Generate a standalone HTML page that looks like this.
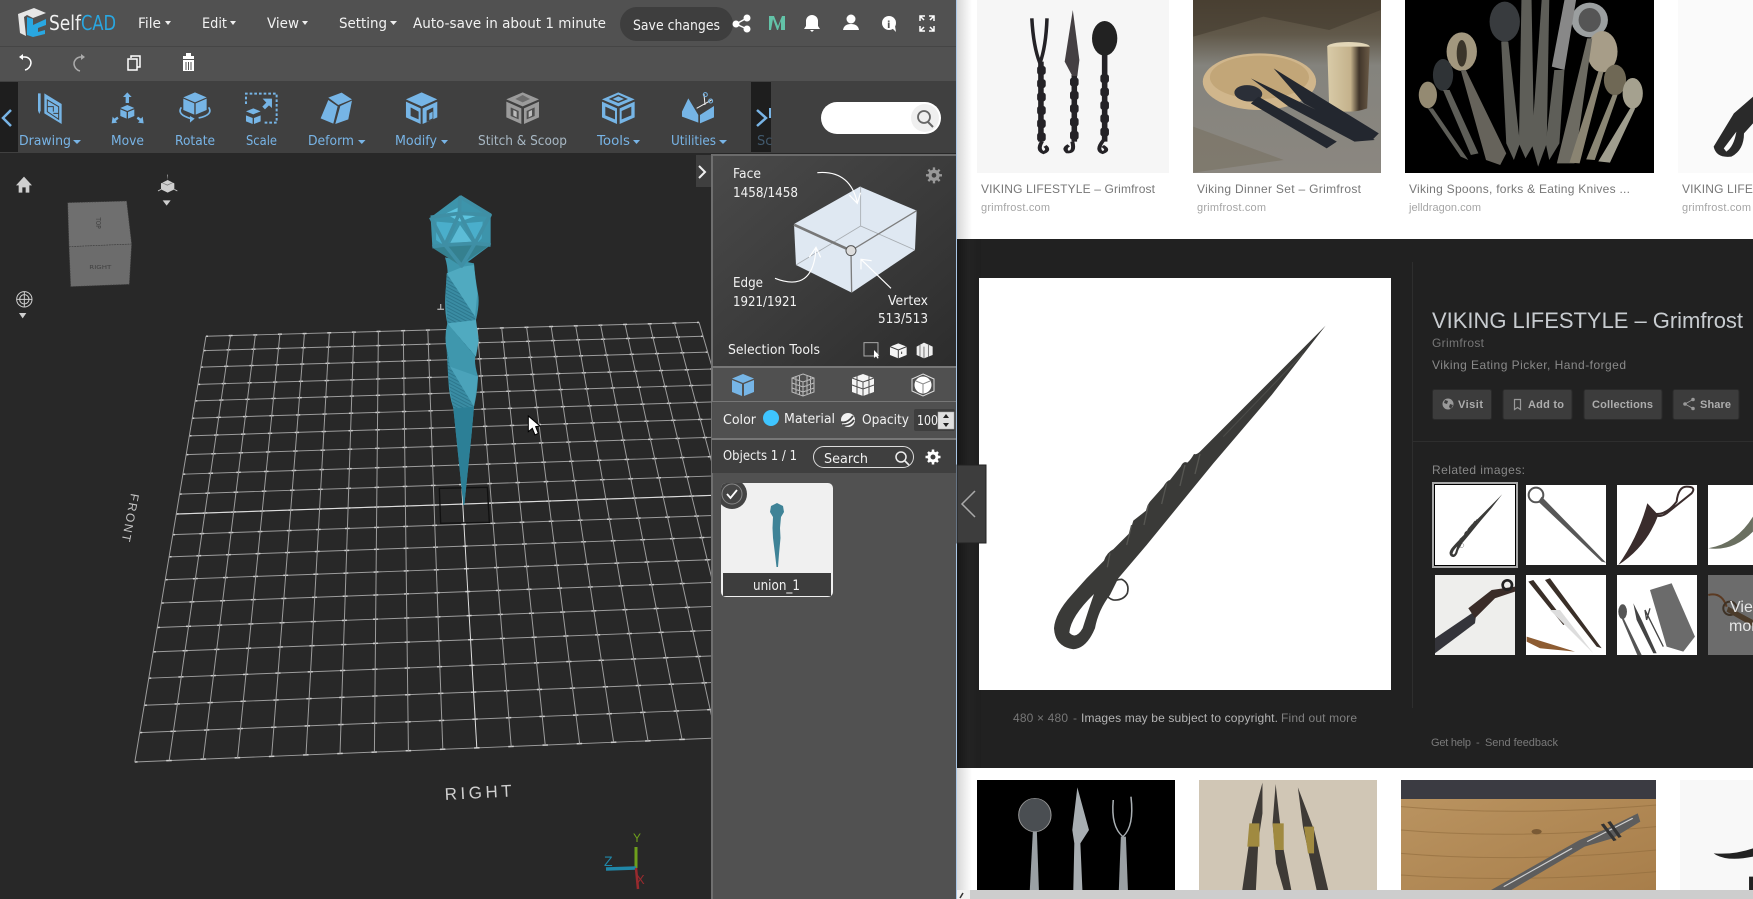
<!DOCTYPE html>
<html lang="en"><head><meta charset="utf-8"><title>SelfCAD</title>
<style>
html,body{margin:0;padding:0;width:1753px;height:899px;overflow:hidden;background:#282828}
svg{position:absolute;left:0;top:0;display:block}
text{font-family:"DejaVu Sans",sans-serif;white-space:pre}
.w{fill:#f2f2f2;font-size:14px}
.b{fill:#78b4e6;font-size:13px}
.g line{vector-effect:non-scaling-stroke;stroke:#9c9c9c;stroke-width:1}
.ic{fill:#76b5e6}
</style></head><body>
<svg width="1753" height="899" viewBox="0 0 1753 899" xmlns="http://www.w3.org/2000/svg">
<defs>
<linearGradient id="sh" x1="0" x2="1"><stop offset="0" stop-color="#d8d8d8"/><stop offset="1" stop-color="#fff"/></linearGradient>
<linearGradient id="pg" x1="0" y1="0" x2="1" y2="1"><stop offset="0" stop-color="#4a4a4a"/><stop offset=".55" stop-color="#3a3a3a"/><stop offset="1" stop-color="#2c2c2c"/></linearGradient>
<linearGradient id="dk" x1="0" x2="1"><stop offset="0" stop-color="#171717"/><stop offset=".5" stop-color="#232323"/><stop offset="1" stop-color="#1f1f1f"/></linearGradient>
<linearGradient id="st" x1="0" y1="0" x2="0" y2="1"><stop offset="0" stop-color="#54493a"/><stop offset=".2" stop-color="#61594a"/><stop offset=".38" stop-color="#84837d"/><stop offset="1" stop-color="#8b8780"/></linearGradient>
<linearGradient id="wd" x1="0" y1="0" x2="1" y2="1"><stop offset="0" stop-color="#bb9562"/><stop offset="1" stop-color="#a87e4a"/></linearGradient>
<linearGradient id="cup" x1="0" x2="1"><stop offset="0" stop-color="#d9cba8"/><stop offset=".55" stop-color="#c4b28c"/><stop offset=".75" stop-color="#40352a"/><stop offset="1" stop-color="#6a5a46"/></linearGradient>
<pattern id="ht" width="6" height="9" patternUnits="userSpaceOnUse" patternTransform="rotate(28)"><rect width="6" height="2.500" fill="#1d5f73" opacity=".55"/></pattern>
<clipPath id="cc"><rect x="721" y="483" width="112" height="114" rx="5"/></clipPath>
<g id="pk">
<path fill="#3a3a38" d="M1067 167L690 545Q680 555 672 552Q662 570 652 578Q640 572 632 590L600 630Q590 632 580 650L540 695Q532 705 528 722L490 752Q485 770 478 790L430 838Q410 848 402 872L350 925L305 975Q255 1030 252 1075Q255 1130 310 1138Q350 1135 375 1075Q385 1020 420 975L445 925L530 825L730 580L905 375Z"/>
<path fill="#fff" d="M298 1088Q302 1040 372 972Q352 1030 338 1075Q318 1110 298 1088Z"/>
<path fill="none" stroke="#3a3a38" stroke-width="5" d="M385 980Q415 930 455 928Q480 940 472 970Q460 992 430 990Q415 985 410 975"/>
<path fill="none" stroke="#565652" stroke-width="4" d="M690 552L675 612M645 585L630 648M590 640L575 702M535 705L522 765M485 765L470 825M420 850L412 892"/>
<path fill="none" stroke="#4c4c49" stroke-width="3" d="M1000 250L760 500"/>
</g>
<g id="rows">
<path pathLength="20" d="M268 70L1515 33"/><path pathLength="20" d="M262 108L1525 70"/><path pathLength="20" d="M255 152L1537 112"/><path pathLength="20" d="M248 198L1549 157"/><path pathLength="20" d="M241 242L1561 199"/><path pathLength="20" d="M233 288L1573 244"/><path pathLength="20" d="M226 335L1586 289"/><path pathLength="20" d="M218 385L1599 337"/><path pathLength="20" d="M210 437L1613 388"/><path pathLength="20" d="M201 490L1627 439"/><path pathLength="20" d="M193 543L1641 490"/><path pathLength="20" d="M184 598L1656 543"/><path pathLength="20" d="M175 657L1672 600"/><path pathLength="20" d="M165 718L1688 659"/><path pathLength="20" d="M155 780L1705 719"/><path pathLength="20" d="M145 845L1722 782"/><path pathLength="20" d="M135 910L1740 845"/><path pathLength="20" d="M123 980L1758 912"/><path pathLength="20" d="M112 1052L1778 982"/><path pathLength="20" d="M100 1125L1797 1053"/><path pathLength="20" d="M88 1203L1818 1128"/>
</g>
</defs>

<!-- canvas -->
<rect width="957" height="899" fill="#282828"/>

<!-- grid -->
<g class="g" transform="translate(100,310) scale(.3954,.3757)">
<g fill="none" stroke="#9c9c9c" stroke-width="2.600"><use href="#rows"/></g>
<g fill="none" stroke="#cfcfcf" stroke-width="4" stroke-dasharray=".16 .84" stroke-dashoffset=".08"><use href="#rows"/></g>
<path d="M193 543L1641 490" fill="none" stroke="#dcdcdc" stroke-width="3"/>
<line x1="268" y1="70" x2="88" y2="1203"/><line x1="330" y1="68" x2="175" y2="1199"/><line x1="393" y1="66" x2="261" y2="1196"/><line x1="455" y1="64" x2="348" y2="1192"/><line x1="517" y1="63" x2="434" y2="1188"/><line x1="580" y1="61" x2="521" y2="1184"/><line x1="642" y1="59" x2="607" y2="1181"/><line x1="704" y1="57" x2="694" y2="1177"/><line x1="767" y1="55" x2="780" y2="1173"/><line x1="829" y1="53" x2="867" y2="1169"/><line x1="892" y1="52" x2="953" y2="1166" style="stroke:#ddd"/><line x1="954" y1="50" x2="1040" y2="1162"/><line x1="1016" y1="48" x2="1126" y2="1158"/><line x1="1079" y1="46" x2="1213" y2="1154"/><line x1="1141" y1="44" x2="1299" y2="1150"/><line x1="1203" y1="42" x2="1386" y2="1147"/><line x1="1266" y1="40" x2="1472" y2="1143"/><line x1="1328" y1="39" x2="1559" y2="1139"/><line x1="1390" y1="37" x2="1645" y2="1135"/><line x1="1453" y1="35" x2="1732" y2="1132"/><line x1="1515" y1="33" x2="1818" y2="1128"/>
</g>

<!-- knife model -->
<g transform="translate(400,180) scale(.3333)">
<path fill="none" stroke="#111" stroke-width="4" d="M118 925L262 922L268 1027L122 1030Z"/>
<path fill="#3f97ad" d="M135 232Q150 280 137 330Q132 390 142 430Q132 470 140 510Q150 545 145 590Q145 640 160 685L190 975L193 975L215 760L222 680Q232 640 234 590Q222 550 226 530Q238 490 234 470Q222 440 228 420Q240 370 234 340Q225 290 222 250Z"/>
<path fill="#2c7f96" d="M160 685L222 680L215 760L193 975L190 975Z"/>
<path fill="#50aac0" d="M140 280L225 410L232 340Q225 290 222 255L190 260Z"/>
<path fill="#3a8ca3" d="M137 330L140 280L225 410L226 530L142 430Z"/>
<path fill="url(#ht)" d="M137 330L140 280L225 410L226 530L142 430Z"/>
<path fill="#50aac0" d="M142 430L228 530L236 480L228 420Z"/>
<path fill="#3a8ca3" d="M140 510L150 560L222 680L160 685L145 600Z"/>
<path fill="url(#ht)" d="M140 510L150 560L222 680L160 685L145 600Z"/>
<path fill="#4ba3ba" d="M150 560L234 590L222 680Z"/>
<path fill="#3d94ab" d="M180 46L272 105L272 195L185 260L97 200L92 112Z"/>
<path fill="#5cc3de" d="M128 105L180 80L180 100L235 105L180 125L148 108Z"/>
<path fill="#4aaecb" d="M110 125L170 130L130 195L108 180ZM190 130L248 125L245 175L225 195Z"/>
<path fill="#5cbcd6" d="M180 135L215 185L150 190Z"/>
<path fill="#35808f" d="M100 205L180 190L270 195L190 250L185 260Z"/>
<path fill="none" stroke="#3f8fa5" stroke-width="11" stroke-linejoin="round" d="M180 50L178 100L92 112M180 50L270 105L178 100M178 100L135 195L225 190L178 100M92 112L135 195L97 200M270 105L225 190L272 195M135 195L185 258L225 190"/>
<path fill="#a8a8a8" d="M120 372h4v14h8v4h-20v-4h8z"/>
<path fill="#fff" stroke="#000" stroke-width="3" d="M385 708L385 755L397 745L405 765L415 760L407 740L420 738Z"/>
</g>

<!-- view labels -->
<text transform="translate(131,493) rotate(101)" font-size="12" letter-spacing="1.800" fill="#c4c4c4" style="font-family:'Liberation Sans',sans-serif">FRONT</text>
<text transform="translate(445,800) rotate(-3)" font-size="17" textLength="67" fill="#cfcfcf" style="font-family:'Liberation Sans',sans-serif">RIGHT</text>

<!-- axis -->
<path stroke="#6e9f1c" stroke-width="3" fill="none" d="M636 847V868"/>
<path stroke="#2087a8" stroke-width="3.500" fill="none" d="M606 869L636 868"/>
<path stroke="#982a2e" stroke-width="2.500" fill="none" d="M636 868L638 889"/>
<text x="633" y="842" font-size="12" fill="#6e9f1c" style="font-family:'Liberation Sans',sans-serif">Y</text>
<text x="604" y="866" font-size="14" fill="#2087a8" style="font-family:'Liberation Sans',sans-serif">Z</text>
<text x="636" y="884" font-size="13" fill="#982a2e" style="font-family:'Liberation Sans',sans-serif">X</text>

<!-- nav cube and tools -->
<g transform="translate(0,160) scale(.3333)">
<path fill="#6f6f6f" d="M203 128L380 123L395 252L207 260Z"/>
<path fill="#6c6c6c" d="M207 260L395 252L388 373L212 380Z"/>
<path stroke="#3c3c3c" stroke-width="2" stroke-dasharray="5 3" fill="none" d="M203 128L380 123L395 252L388 373L212 380L207 260L203 128M207 260L395 252"/>
<text transform="translate(288,172) rotate(90)" font-size="20" fill="#404040" textLength="34" lengthAdjust="spacingAndGlyphs">TOP</text>
<text x="268" y="327" font-size="16" fill="#404040" textLength="66" lengthAdjust="spacingAndGlyphs">RIGHT</text>
<path fill="#cfcfcf" d="M72 50L96 76H88V98H77V82H67V98H56V76H48Z"/>
<path fill="#cfcfcf" d="M501 44h2v16l20 10v18l-20 10-20-10V70l20-10z"/>
<path stroke="#cfcfcf" stroke-width="2.500" d="M483 88l-9 5M523 88l9 5"/>
<path fill="#282828" d="M502 74l-16-7v2l16 8 16-8v-2z" opacity=".5"/>
<path fill="#cfcfcf" d="M488 121h24l-12 16zM57 459h22l-11 16z"/>
<circle cx="73" cy="418" r="23" fill="none" stroke="#cfcfcf" stroke-width="3"/>
<circle cx="73" cy="418" r="14" fill="none" stroke="#cfcfcf" stroke-width="3"/>
<path stroke="#cfcfcf" stroke-width="3" d="M50 418H96M73 395V441"/>
</g>

<!-- top bars -->
<rect width="957" height="81" fill="#515151"/>
<rect y="46" width="957" height="1" fill="#454545"/>
<rect y="81" width="957" height="72" fill="#404040"/>
<rect y="82" width="18" height="70" fill="#1e1e1e"/>
<rect x="751" y="82" width="20" height="70" fill="#1e1e1e"/>

<!-- logo -->
<path fill="#e6e6e6" d="M18 14L34 8L46 13L33 18L27 15L24 17L26 36L20 33Z"/>
<path fill="#29a7e1" d="M27 17L33 19V25L46 19V25L38 28V32L45 30V34L33 37L27 35Z"/>
<text x="49" y="30" font-size="20" fill="#f0f0f0" textLength="32" lengthAdjust="spacingAndGlyphs">Self</text>
<text x="81" y="30" font-size="20" fill="#29a7e1" textLength="35" lengthAdjust="spacingAndGlyphs">CAD</text>

<text class="w" x="138" y="28" textLength="23" lengthAdjust="spacingAndGlyphs">File</text>
<text class="w" x="202" y="28" textLength="25" lengthAdjust="spacingAndGlyphs">Edit</text>
<text class="w" x="267" y="28" textLength="32" lengthAdjust="spacingAndGlyphs">View</text>
<text class="w" x="339" y="28" textLength="48" lengthAdjust="spacingAndGlyphs">Setting</text>
<text class="w" x="413" y="28" textLength="193" lengthAdjust="spacingAndGlyphs">Auto-save in about 1 minute</text>
<path fill="#eee" d="M165 21h6l-3 4zM230 21h6l-3 4zM302 21h6l-3 4zM390 21h7l-3.500 4z"/>
<rect x="620" y="7" width="113" height="34" rx="17" fill="#3e3e3e"/>
<text class="w" x="633" y="30" textLength="87" lengthAdjust="spacingAndGlyphs">Save changes</text>

<!-- header icons -->
<g fill="#fff" stroke="none">
<circle cx="736" cy="24" r="3.500"/><circle cx="747" cy="18" r="3.500"/><circle cx="747" cy="29" r="3.500"/>
<path stroke="#fff" stroke-width="1.500" d="M736 24L747 18M736 24L747 29"/>
<path d="M812 15a6 6 0 0 1 6 6v5l2 3h-16l2-3v-5a6 6 0 0 1 6-6zM810 30h4l-2 2z"/>
<circle cx="851" cy="19" r="4.500"/><path d="M843 30q1-6 8-6t8 6z"/>
<circle cx="889" cy="23" r="7"/><path d="M892 28l4 4-1-6z"/>
</g>
<text x="887" y="28" font-size="10" font-weight="bold" fill="#515151">i</text>
<path fill="#63c3a8" d="M769 16h5l4 10 4-10h3v14h-4v-9l-3 9h-1l-4-11-2 11h-2z"/>
<path fill="none" stroke="#fff" stroke-width="1.500" d="M920 21v-5h5M934 21v-5h-5M920 26v5h5M934 26v5h-5M920 16l4 4M934 16l-4 4M920 31l4-4M934 31l-4-4"/>

<!-- undo row -->
<path fill="none" stroke="#fff" stroke-width="1.500" d="M20 57h5a6 6 0 0 1 6 6a8 8 0 0 1-6 7"/><path fill="#fff" d="M19 57l4-3v6z"/>
<path fill="none" stroke="#aaa" stroke-width="1.500" d="M84 57h-4a7 7 0 0 0-6 7a8 8 0 0 0 6 7"/><path fill="#aaa" d="M85 57l-4-3v6z"/>
<rect x="128" y="59" width="9" height="11" fill="none" stroke="#fff" stroke-width="1.500"/><path fill="none" stroke="#fff" stroke-width="1.500" d="M131 58v-2h9v11h-3"/>
<path fill="#fff" d="M183 60h11v11h-11zM186 53h5v3h3v3h-11v-3h3z"/><path stroke="#515151" d="M186 62v8M188.500 62v8M191 62v8"/>

<path fill="none" stroke="#78b4e6" stroke-width="2.500" d="M11 110l-8 8 8 8"/>
<path fill="none" stroke="#78b4e6" stroke-width="2.500" d="M757 110l9 8-9 8"/>
<rect x="769" y="108" width="2" height="10" fill="#78b4e6"/>

<!-- toolbar icons (3x coords) -->
<g transform="scale(.3333)" class="ic">
<path d="M133 280L185 312V372L133 340Z"/><path d="M114 280h8v52l-4 10-4-10z"/>
<path stroke="#404040" stroke-width="3" fill="none" d="M142 300L176 320V358L142 335ZM142 320H160V335M176 340H160"/>
<path d="M382 277l13 14h-8v18h-10v-18h-8z"/>
<path d="M382 315l21 9-21 9-21-9zM361 328l19 8v20l-19-8zM403 328l-19 8v20l19-8z"/>
<path d="M335 370l3-20 5 6 9-6 4 6-9 7 5 5zM431 370l-3-20-5 6-9-6-4 6 9 7-5 5z"/>
<path d="M585 277l35 15-35 15-35-15zM550 296l33 14v34l-33-14zM620 296l-33 14v34l33-14z"/>
<path fill="none" stroke="#76b5e6" stroke-width="5" d="M544 322q-15 22 30 34M626 322q15 22-30 32"/>
<path d="M570 348l14 8-14 12z"/>
<path fill="none" stroke="#76b5e6" stroke-width="6" stroke-dasharray="8 6" d="M738 312V281H830V368H792"/>
<path d="M760 325l22 9-22 9-22-9zM738 346l20 8v18l-20-8zM782 346l-20 8v18l20-8z"/>
<path d="M788 296h28v28l-9-8-12 12-8-8 12-12z"/>
<path d="M985 293L1025 278L1056 298L1015 315zM985 300L1013 319L1000 371L962 355zM1021 318L1056 302L1045 358L1006 372z"/>
<path d="M1265 277L1312 298L1265 319L1218 298zM1218 305L1262 325V372L1218 352zM1312 305L1268 325V372L1312 352z"/>
<path fill="#404040" d="M1232 322L1256 335V358L1232 348z"/>
<path fill="#404040" d="M1280 332L1300 322V358L1280 366z"/>
<path d="M1288 340L1298 335V355L1288 360z"/>
</g>
<g transform="translate(480,0) scale(.3333)">
<path fill="#9b9b9b" d="M128 277L177 298L128 319L79 298zM79 305L124 325V372L79 352zM177 305L132 325V372L177 352z"/>
<path fill="#505050" d="M92 322L116 333V358L92 348zM164 322L140 333V358L164 348z"/>
<path fill="#bbb" d="M100 330L110 335V352L100 347zM156 330L146 335V352L156 347z"/>
<path fill="#6d6d6d" d="M128 285L150 297L128 307L106 297z"/>
<path fill="#76b5e6" d="M415 277L464 298L415 319L366 298zM366 305L411 325V372L366 352zM464 305L419 325V372L464 352z"/>
<path fill="#404040" d="M415 284L444 297L415 309L386 297zM376 320L405 333V358L376 346zM454 320L425 333V358L454 346z"/>
<path fill="#76b5e6" d="M415 289L432 297L415 304L398 297z"/>
<path fill="#76b5e6" d="M625 295L655 345L655 368L606 350V335zM660 345L702 318V352L660 370z"/>
<path fill="none" stroke="#f0f0f0" stroke-width="3" d="M650 325L695 300M672 282L675 315"/>
<circle cx="676" cy="284" r="6" fill="none" stroke="#76b5e6" stroke-width="3"/><circle cx="692" cy="303" r="6" fill="none" stroke="#76b5e6" stroke-width="3"/>
</g>

<!-- toolbar labels -->
<text class="b" x="19" y="145" textLength="52" lengthAdjust="spacingAndGlyphs">Drawing</text>
<text class="b" x="111" y="145" textLength="33" lengthAdjust="spacingAndGlyphs">Move</text>
<text class="b" x="175" y="145" textLength="40" lengthAdjust="spacingAndGlyphs">Rotate</text>
<text class="b" x="246" y="145" textLength="31" lengthAdjust="spacingAndGlyphs">Scale</text>
<text class="b" x="308" y="145" textLength="46" lengthAdjust="spacingAndGlyphs">Deform</text>
<text class="b" x="395" y="145" textLength="42" lengthAdjust="spacingAndGlyphs">Modify</text>
<text class="b" x="478" y="145" textLength="89" lengthAdjust="spacingAndGlyphs" style="fill:#a8b8c4">Stitch &amp; Scoop</text>
<text class="b" x="597" y="145" textLength="33" lengthAdjust="spacingAndGlyphs">Tools</text>
<text class="b" x="671" y="145" textLength="45" lengthAdjust="spacingAndGlyphs">Utilities</text>
<text class="b" x="757" y="145" style="fill:#41596d">Sc</text>
<path fill="#78b4e6" d="M73 140h8l-4 4zM358 140h7.500l-3.700 4zM441 140h7l-3.500 4zM633 140h7l-3.500 4zM719 140h8l-4 4z"/>

<!-- search -->
<rect x="821" y="102" width="120" height="32" rx="16" fill="#fff"/>
<circle cx="925" cy="118" r="14" fill="#efefef"/>
<circle cx="924" cy="117" r="6" fill="none" stroke="#666" stroke-width="1.800"/><path stroke="#666" stroke-width="2" d="M928 122l5 5"/>

<!-- right panel -->
<rect x="696" y="155" width="16" height="32" fill="#3f3f3f"/>
<path fill="none" stroke="#f0f0f0" stroke-width="2" d="M699 166l6 6-6 6"/>
<rect x="711" y="154" width="246" height="745" fill="#515151"/>
<rect x="712" y="155" width="245" height="212" fill="url(#pg)"/>
<rect x="711" y="154" width="246" height="2" fill="#6b6b6b"/>
<rect x="711" y="154" width="2" height="745" fill="#6f6f6f"/>

<g transform="translate(700,150) scale(.3333)">
<path fill="#dfe8f2" d="M480 110L650 182L645 300L455 428L288 345L282 222Z"/>
<path fill="none" stroke="#a8adb2" stroke-width="2.500" d="M482 110V228M288 345L482 228L645 300"/>
<path fill="none" stroke="#7d7d7d" stroke-width="4" d="M453 302L650 182M453 302L455 428"/>
<path fill="none" stroke="#777" stroke-width="8" d="M282 224L453 302"/>
<circle cx="453" cy="302" r="15" fill="#ddd" stroke="#555" stroke-width="3"/>
<g fill="none" stroke="#fff" stroke-width="3.500">
<path d="M352 68Q450 60 472 158M448 135L472 160L482 128"/>
<path d="M225 385Q340 430 348 295M328 322L348 292L362 322"/>
<path d="M573 415L483 328M483 358L483 328L515 332"/>
</g>
<circle cx="702" cy="76" r="17" fill="#999"/>
<path stroke="#999" stroke-width="7" d="M702 52V100M678 76H726M685 59L719 93M719 59L685 93"/>
<circle cx="702" cy="76" r="7" fill="#3f3f3f"/>
<rect x="492" y="578" width="42" height="40" fill="none" stroke="#aaa" stroke-width="3"/>
<path fill="#fff" d="M522 600v24l6-5 5 7 3-2-4-7h6z"/>
<path fill="#f4f4f4" d="M595 580L620 590V615L595 625L570 615V590Z"/><path stroke="#3e3e3e" stroke-width="3" fill="none" d="M570 590L595 600L620 590M595 600V625M605 605V612"/>
<path fill="#eee" d="M672 578L698 590V615L672 625L650 615V590Z"/><path stroke="#3e3e3e" stroke-width="2" fill="none" d="M660 585V620M672 590V625M685 585V620"/>
</g>

<text class="w" x="733" y="178" style="font-size:13px" textLength="28" lengthAdjust="spacingAndGlyphs">Face</text>
<text class="w" x="733" y="197" style="font-size:13px" textLength="65" lengthAdjust="spacingAndGlyphs">1458/1458</text>
<text class="w" x="733" y="287" style="font-size:13px" textLength="30" lengthAdjust="spacingAndGlyphs">Edge</text>
<text class="w" x="733" y="306" style="font-size:13px" textLength="64" lengthAdjust="spacingAndGlyphs">1921/1921</text>
<text class="w" x="888" y="305" style="font-size:13px" textLength="40" lengthAdjust="spacingAndGlyphs">Vertex</text>
<text class="w" x="878" y="323" style="font-size:13px" textLength="50" lengthAdjust="spacingAndGlyphs">513/513</text>
<text class="w" x="728" y="354" style="font-size:13px" textLength="92" lengthAdjust="spacingAndGlyphs">Selection Tools</text>

<!-- tab row -->
<rect x="712" y="367" width="245" height="35" fill="#505050" stroke="#777" stroke-width="2"/>
<path fill="#76b5e6" d="M743 374l11 4.500-11 4.500-11-4.500zM732 380l10 4v12l-10-4zM754 380l-10 4v12l10-4z"/>
<g fill="none" stroke="#bbb" stroke-width="1">
<path d="M803 374l11 4v14l-11 4-11-4v-14zM792 378l11 4 11-4M803 382v14M796 376v18M799.500 375v20M807 375v20M810.500 376v18M792 383l11 4 11-4M792 388l11 4 11-4"/>
</g>
<path fill="#f4f4f4" d="M863 374l11 4v14l-11 4-11-4v-14z"/>
<path fill="none" stroke="#505050" d="M852 378l11 4 11-4M863 382v14M857 376v18M869 376v18M852 385l11 4 11-4"/>
<path fill="none" stroke="#ddd" d="M923 374l11 5v12l-11 5-11-5v-12z"/><circle cx="923" cy="385" r="8.500" fill="#fff"/><path stroke="#888" fill="none" d="M916 381l7 3 7-3M923 384v9"/>

<!-- colour row -->
<rect x="712" y="402" width="245" height="37" fill="#505050"/><rect x="712" y="438" width="245" height="2" fill="#777"/>
<text class="w" x="723" y="424" style="font-size:13px" textLength="33" lengthAdjust="spacingAndGlyphs">Color</text>
<circle cx="771" cy="418" r="8" fill="#3fc5ff"/>
<text class="w" x="784" y="423" style="font-size:13px" textLength="51" lengthAdjust="spacingAndGlyphs">Material</text>
<circle cx="848" cy="420" r="7" fill="#f2f2f2"/><path fill="none" stroke="#444" stroke-width="1.800" d="M841 422q6 2 12-6M843 425q7 1 11-5"/>
<text class="w" x="862" y="424" style="font-size:13px" textLength="47" lengthAdjust="spacingAndGlyphs">Opacity</text>
<rect x="914" y="409" width="41" height="22" rx="2" fill="#3e3e3e"/>
<text class="w" x="917" y="425" style="font-size:13px" textLength="21" lengthAdjust="spacingAndGlyphs">100</text>
<rect x="938" y="412" width="16" height="17" fill="#e0e0e0" stroke="#aaa" stroke-width=".5"/>
<path fill="#222" d="M943 418l3-4 3 4zM943 423h6l-3 4z"/>

<!-- objects row -->
<rect x="712" y="440" width="245" height="33" fill="#3f3f3f"/>
<text class="w" x="723" y="460" style="font-size:13px" textLength="74" lengthAdjust="spacingAndGlyphs">Objects 1 / 1</text>
<rect x="813.500" y="446.500" width="100" height="21" rx="10.500" fill="#3f3f3f" stroke="#dcdcdc"/>
<text class="w" x="824" y="463" style="font-size:13px" textLength="44" lengthAdjust="spacingAndGlyphs">Search</text>
<circle cx="901" cy="457" r="5" fill="none" stroke="#eee" stroke-width="1.500"/><path stroke="#eee" stroke-width="1.700" d="M905 461l4 4"/>
<circle cx="933" cy="457" r="5.500" fill="#fff"/>
<path stroke="#fff" stroke-width="2.500" d="M933 449.500v15M925.500 457h15M928 452l10 10M938 452l-10 10"/><circle cx="933" cy="457" r="2.500" fill="#3f3f3f"/>

<!-- object card -->
<rect x="721" y="483" width="112" height="114" rx="5" fill="#f0f0f0"/>
<g clip-path="url(#cc)">
<rect x="723" y="573" width="108" height="23" fill="#3d3d3d"/>
<circle cx="732" cy="494" r="15" fill="#444"/>
<circle cx="732" cy="494" r="10" fill="none" stroke="#888"/>
<path fill="none" stroke="#fff" stroke-width="1.800" d="M727 494l3.500 4 6.500-8"/>
</g>
<path fill="#3f8397" d="M777 503l6 3 1 6-3 5-1 11 .5 10-1.500 16-1 13-1.500 0-1.500-13-2-16-.5-10 .5-11-3-5 1-6z"/>
<text x="753" y="590" font-size="14" fill="#f2f2f2" textLength="47" lengthAdjust="spacingAndGlyphs">union_1</text>

<!-- ================= right page ================= -->
<rect x="957" width="796" height="899" fill="#fff"/>
<rect x="957" y="0" width="15" height="890" fill="url(#sh)"/>
<rect x="956" width="1" height="899" fill="#a9c6e6"/>

<!-- row 1 images -->
<rect x="977" width="192" height="173" fill="#f6f6f6"/>
<rect x="1193" width="188" height="173" fill="url(#st)"/>
<rect x="1405" width="249" height="173" fill="#000"/>
<rect x="1678" width="75" height="173" fill="#fafafa"/>

<g transform="translate(960,0) scale(.5058,.3333)">
<!-- cutlery 1 -->
<g fill="none" stroke="#242226">
<path stroke-width="7" d="M142 55Q145 140 158 190M172 55Q170 140 158 190"/>
<path stroke-width="11" d="M160 185V425"/>
<path stroke-width="17" stroke-linecap="round" stroke-dasharray="12 28" d="M161 205V420"/>
<path stroke-width="8" d="M162 425Q152 450 165 458Q178 450 168 438"/>
<path stroke-width="11" d="M226 225V425"/>
<path stroke-width="17" stroke-linecap="round" stroke-dasharray="12 28" d="M226 240V420"/>
<path stroke-width="8" d="M222 425Q228 458 212 456Q204 445 215 436"/>
<path stroke-width="11" d="M286 165V425"/>
<path stroke-width="17" stroke-linecap="round" stroke-dasharray="12 28" d="M286 230V420"/>
<path stroke-width="8" d="M284 420Q268 450 282 458Q296 450 282 438"/>
</g>
<path fill="#443f42" d="M223 30L207 185L222 228H232L236 180Z"/>
<ellipse cx="286" cy="115" rx="25" ry="52" fill="#222"/>
<!-- dinner set -->
<path fill="#3e352a" d="M461 0H832V30L730 90L600 50L461 110Z" opacity=".5"/>
<ellipse cx="592" cy="245" rx="112" ry="85" fill="#d0b68c"/><ellipse cx="592" cy="232" rx="98" ry="65" fill="#c2a678"/>
<ellipse cx="768" cy="140" rx="42" ry="14" fill="#e2d6b8"/>
<path fill="url(#cup)" d="M726 140H810L805 325Q768 345 730 325Z"/>
<ellipse cx="570" cy="280" rx="28" ry="24" fill="#2b2f38" transform="rotate(20 570 280)"/>
<path fill="#23272f" d="M590 290L745 425L725 445L575 310ZM575 235L800 400L820 420L780 425L650 320ZM620 205L710 290L828 400L815 420L680 310Z"/>
<path fill="#77705e" d="M461 380L640 480L461 518Z" opacity=".55"/>
<!-- spoons -->
<ellipse cx="992" cy="155" rx="30" ry="58" fill="#a2977e"/><ellipse cx="992" cy="160" rx="10" ry="40" fill="#3b352a"/><ellipse cx="955" cy="225" rx="20" ry="48" fill="#2f3336"/><ellipse cx="925" cy="285" rx="18" ry="40" fill="#948a72"/>
<ellipse cx="1077" cy="65" rx="30" ry="60" fill="#383b3e"/><ellipse cx="1245" cy="60" rx="36" ry="52" fill="#9b9fa0"/><ellipse cx="1245" cy="60" rx="22" ry="36" fill="#555"/><ellipse cx="1270" cy="155" rx="30" ry="62" fill="#a79d88"/><ellipse cx="1295" cy="240" rx="22" ry="46" fill="#6f6855"/><ellipse cx="1330" cy="280" rx="20" ry="46" fill="#a5a18f"/>
<g fill="#5e5e58">
<path d="M925 325L935 325L1005 480L990 470Z"/><path d="M955 270L968 270L1025 460L1010 465Z"/>
<path fill="#66635b" d="M990 210L1000 210L1080 460L1068 495L1040 480Z"/><path d="M1070 125L1084 125L1107 430L1095 480L1080 430Z"/>
<path d="M1110 0H1130L1135 430L1118 475L1105 430Z"/><path d="M1150 0L1165 0L1160 430L1143 500L1130 430Z"/>
<path fill="#888" d="M1195 0H1218L1195 210L1170 200Z"/><path d="M1175 210H1195L1185 430L1165 480L1158 430Z"/>
<path fill="#6d6b62" d="M1240 115L1250 115L1215 490L1180 490Z"/><path fill="#8a8472" d="M1262 215L1272 215L1225 490L1205 488Z"/>
<path fill="#8a8674" d="M1290 285L1300 285L1255 480L1238 478Z"/><path fill="#9f9d8e" d="M1325 325L1335 325L1285 488L1262 484Z"/>
</g>
<path fill="#2a2a2a" d="M1568 290L1530 340L1510 390L1490 440Q1495 475 1525 470Q1550 450 1550 400L1568 370Z"/><path fill="#fafafa" d="M1510 445L1535 395Q1530 440 1515 455Z"/>
</g>

<g>
<text x="981" y="193" font-size="12" fill="#777" textLength="174" style="font-family:'Liberation Sans',sans-serif">VIKING LIFESTYLE – Grimfrost</text>
<text x="1197" y="193" font-size="12" fill="#777" textLength="164" style="font-family:'Liberation Sans',sans-serif">Viking Dinner Set – Grimfrost</text>
<text x="1409" y="193" font-size="12" fill="#777" textLength="221" style="font-family:'Liberation Sans',sans-serif">Viking Spoons, forks &amp; Eating Knives ...</text>
<text x="1682" y="193" font-size="12" fill="#777" textLength="174" style="font-family:'Liberation Sans',sans-serif">VIKING LIFESTYLE – Grimfrost</text>
<text x="981" y="211" font-size="11" fill="#a5a5a5" textLength="69" style="font-family:'Liberation Sans',sans-serif">grimfrost.com</text>
<text x="1197" y="211" font-size="11" fill="#a5a5a5" textLength="69" style="font-family:'Liberation Sans',sans-serif">grimfrost.com</text>
<text x="1409" y="211" font-size="11" fill="#a5a5a5" textLength="72" style="font-family:'Liberation Sans',sans-serif">jelldragon.com</text>
<text x="1682" y="211" font-size="11" fill="#a5a5a5" textLength="69" style="font-family:'Liberation Sans',sans-serif">grimfrost.com</text>
</g>

<!-- dark band -->
<rect x="957" y="239" width="796" height="529" fill="#212121"/>
<rect x="957" y="239" width="24" height="529" fill="url(#dk)"/>
<rect x="1412" y="262" width="1" height="446" fill="#2e2e2e"/>
<rect x="1412" y="441" width="341" height="1" fill="#2e2e2e"/>

<rect x="979" y="278" width="412" height="412" fill="#fff"/>
<g transform="translate(970,270) scale(.3333)"><use href="#pk"/></g>
<rect x="957" y="465" width="29" height="78" fill="#3d3d3d" stroke="#222"/>
<path fill="none" stroke="#aaa" stroke-width="1.500" d="M975 491L962 504L975 517"/>

<g>
<text x="1432" y="328" font-size="22" fill="#c8ccd0" textLength="311" style="font-family:'Liberation Sans',sans-serif">VIKING LIFESTYLE – Grimfrost</text>
<text x="1432" y="347" font-size="12" fill="#777" textLength="52" style="font-family:'Liberation Sans',sans-serif">Grimfrost</text>
<text x="1432" y="369" font-size="12" fill="#8a8a8a" textLength="194" style="font-family:'Liberation Sans',sans-serif">Viking Eating Picker, Hand-forged</text>
<text x="1432" y="474" font-size="12" fill="#888" textLength="93" style="font-family:'Liberation Sans',sans-serif">Related images:</text>
</g>

<g fill="#3c3c3c" stroke="#2a2a2a">
<rect x="1432.500" y="389.500" width="59" height="30" rx="2"/><rect x="1503" y="389.500" width="69" height="30" rx="2"/><rect x="1584" y="389.500" width="78" height="30" rx="2"/><rect x="1673" y="389.500" width="66" height="30" rx="2"/>
</g>
<g font-size="11" font-weight="bold" fill="#adadad">
<text x="1458" y="408" textLength="25" style="font-family:'Liberation Sans',sans-serif">Visit</text>
<text x="1528" y="408" textLength="36" style="font-family:'Liberation Sans',sans-serif">Add to</text>
<text x="1592" y="408" textLength="61" style="font-family:'Liberation Sans',sans-serif">Collections</text>
<text x="1700" y="408" textLength="31" style="font-family:'Liberation Sans',sans-serif">Share</text>
</g>
<circle cx="1448" cy="404" r="5.500" fill="#999"/><path fill="#3c3c3c" d="M1445 400l3 1-1 3-3-1zM1450 404l3 1-2 4-2-2z"/>
<path fill="none" stroke="#999" stroke-width="1.200" d="M1514.500 399.500h6v10l-3-2-3 2z"/>
<circle cx="1685" cy="404" r="1.800" fill="#999"/><circle cx="1693" cy="399.500" r="1.800" fill="#999"/><circle cx="1693" cy="408.500" r="1.800" fill="#999"/><path stroke="#999" fill="none" d="M1685 404l8-4.500M1685 404l8 4.500"/>

<!-- related thumbs -->
<rect x="1432" y="482" width="86" height="86" fill="#aaa"/><rect x="1434" y="484" width="82" height="82" fill="#000"/>
<rect x="1435" y="485" width="80" height="80" fill="#fff"/>
<g transform="translate(1433.200,483.500) scale(.0647)"><use href="#pk"/></g>
<rect x="1526" y="485" width="80" height="80" fill="#fff"/>
<rect x="1617" y="485" width="80" height="80" fill="#fff"/>
<rect x="1708" y="485" width="45" height="80" fill="#fff"/>
<rect x="1435" y="575" width="80" height="80" fill="#eeeeec"/>
<rect x="1526" y="575" width="80" height="80" fill="#fff"/>
<rect x="1617" y="575" width="80" height="80" fill="#fff"/>
<rect x="1708" y="575" width="45" height="80" fill="#6c6c6c"/>
<g transform="translate(1400,290) scale(.3333)">
<circle cx="408" cy="615" r="22" fill="none" stroke="#555" stroke-width="6"/>
<path fill="#575757" d="M425 620L618 818L605 815L415 635Z"/>
<path fill="#3a2c2c" d="M655 825Q715 740 742 640L775 675Q740 770 655 825Z"/>
<path fill="none" stroke="#3a2c2c" stroke-width="6" d="M745 660Q770 690 800 670L875 610Q890 590 860 590Q835 590 830 635Q800 675 765 672"/>
<path fill="#6a6f60" d="M925 775Q1010 760 1059 680V725Q1000 785 925 775Z"/>
<path fill="#34343a" d="M105 1045L230 960L225 1000L105 1090Z"/>
<path fill="#3a2c28" d="M205 955L275 900L345 890V905L285 925L225 985Z"/>
<circle cx="322" cy="885" r="14" fill="none" stroke="#222" stroke-width="8"/>
<path fill="#3a2f28" d="M385 875L400 870L500 1000L490 1005ZM435 870L450 865L605 1075L590 1070Z"/>
<path fill="#ddd" d="M450 960L480 960L580 1090Z"/><path fill="#8d5c32" d="M380 1040L525 1085L420 1075L380 1055Z"/>
<path fill="#6b6b6b" d="M750 900L815 880L885 1040L850 1085L800 1070Z"/>
<ellipse cx="668" cy="965" rx="13" ry="22" fill="#555"/><path fill="#555" d="M665 985h6L725 1095H712Z"/>
<path fill="#444" d="M700 940L725 990L770 1090L760 1090L710 990Z"/><path fill="none" stroke="#444" stroke-width="4" d="M735 960L790 1070M735 960L740 990M750 955L740 990"/>
<path fill="none" stroke="#5b3a22" stroke-width="6" d="M925 915Q965 905 980 950"/>
<circle cx="990" cy="955" r="20" fill="none" stroke="#3e3226" stroke-width="6"/>
<path fill="#4b3b2a" d="M985 950L1059 990V1010L980 965Z"/>
</g>
<text x="1730" y="612" font-size="16" fill="#e6e6e6" style="font-family:'Liberation Sans',sans-serif">View</text>
<text x="1729" y="631" font-size="16" fill="#e6e6e6" style="font-family:'Liberation Sans',sans-serif">more</text>

<!-- footer text in band -->
<g font-size="12">
<text x="1013" y="722" fill="#777" textLength="55" style="font-family:'Liberation Sans',sans-serif">480 × 480</text>
<text x="1073" y="722" fill="#777" style="font-family:'Liberation Sans',sans-serif">-</text>
<text x="1081" y="722" fill="#b5b5b5" textLength="197" style="font-family:'Liberation Sans',sans-serif">Images may be subject to copyright.</text>
<text x="1281" y="722" fill="#808080" textLength="76" style="font-family:'Liberation Sans',sans-serif">Find out more</text>
<text x="1431" y="746" font-size="11" fill="#7a7a7a" textLength="40" style="font-family:'Liberation Sans',sans-serif">Get help</text>
<text x="1476" y="746" font-size="11" fill="#7a7a7a" style="font-family:'Liberation Sans',sans-serif">-</text>
<text x="1485" y="746" font-size="11" fill="#7a7a7a" textLength="73" style="font-family:'Liberation Sans',sans-serif">Send feedback</text>
</g>

<!-- row 2 images -->
<rect x="977" y="780" width="198" height="110" fill="#000"/>
<rect x="1199" y="780" width="178" height="110" fill="#d0c6b5"/>
<rect x="1401" y="780" width="255" height="110" fill="url(#wd)"/>
<rect x="1401" y="780" width="255" height="19" fill="#3b3b42"/>
<rect x="1680" y="780" width="73" height="110" fill="#f8f8f8"/>
<g transform="translate(960,690) scale(.5058,.3333)">
<ellipse cx="148" cy="375" rx="32" ry="50" fill="#4a4e52"/><ellipse cx="148" cy="375" rx="32" ry="50" fill="none" stroke="#999" stroke-width="2"/>
<path fill="#9aa0a4" d="M144 425H152L156 600H138Z"/>
<path fill="#a8aeb2" d="M232 292L255 420L238 460L242 600H224L226 460L222 420Z"/>
<path fill="none" stroke="#aab0b4" stroke-width="3" d="M303 330Q298 410 322 440Q345 410 338 320"/>
<path fill="#9aa0a4" d="M318 440H328L332 600H314Z"/>
<path fill="#3e3a36" d="M598 278L578 390L558 600H585L590 450L598 370ZM624 282L618 400L625 520L640 600H655L640 480L632 390ZM668 292L678 410L705 600H728L700 420Z"/>
<path fill="#a08a40" d="M572 400H592V470H568ZM618 400H640V480H622ZM680 410H700V490H688Z"/>
<g fill="none" stroke="#8f6a3c" stroke-width="3" opacity=".6"><path d="M872 350Q1100 380 1376 345M872 420Q1100 450 1376 410M872 490Q1100 520 1376 480M872 555Q1100 580 1376 545"/></g>
<path fill="#5d5d5d" d="M1050 600L1225 450L1280 415L1340 370L1345 395L1290 445L1235 470L1090 600Z"/>
<path fill="none" stroke="#d0d0d0" stroke-width="3" d="M1075 590L1210 475M1240 455L1330 385"/>
<path fill="none" stroke="#333" stroke-width="7" d="M1270 402L1295 452M1283 395L1305 442"/>
<ellipse cx="1140" cy="425" rx="10" ry="8" fill="#7a5a35"/>
<path fill="#222" d="M1490 490Q1530 495 1568 475V500Q1520 515 1495 495ZM1560 560H1568V600H1560Z"/>
</g>

<!-- scrollbar -->
<rect x="957" y="890" width="796" height="9" fill="#f1f1f1"/>
<rect x="970" y="890" width="783" height="9" fill="#cdcdcd"/>
<path fill="none" stroke="#333" stroke-width="1.500" d="M963 893l-3 5"/>
</svg>
</body></html>
